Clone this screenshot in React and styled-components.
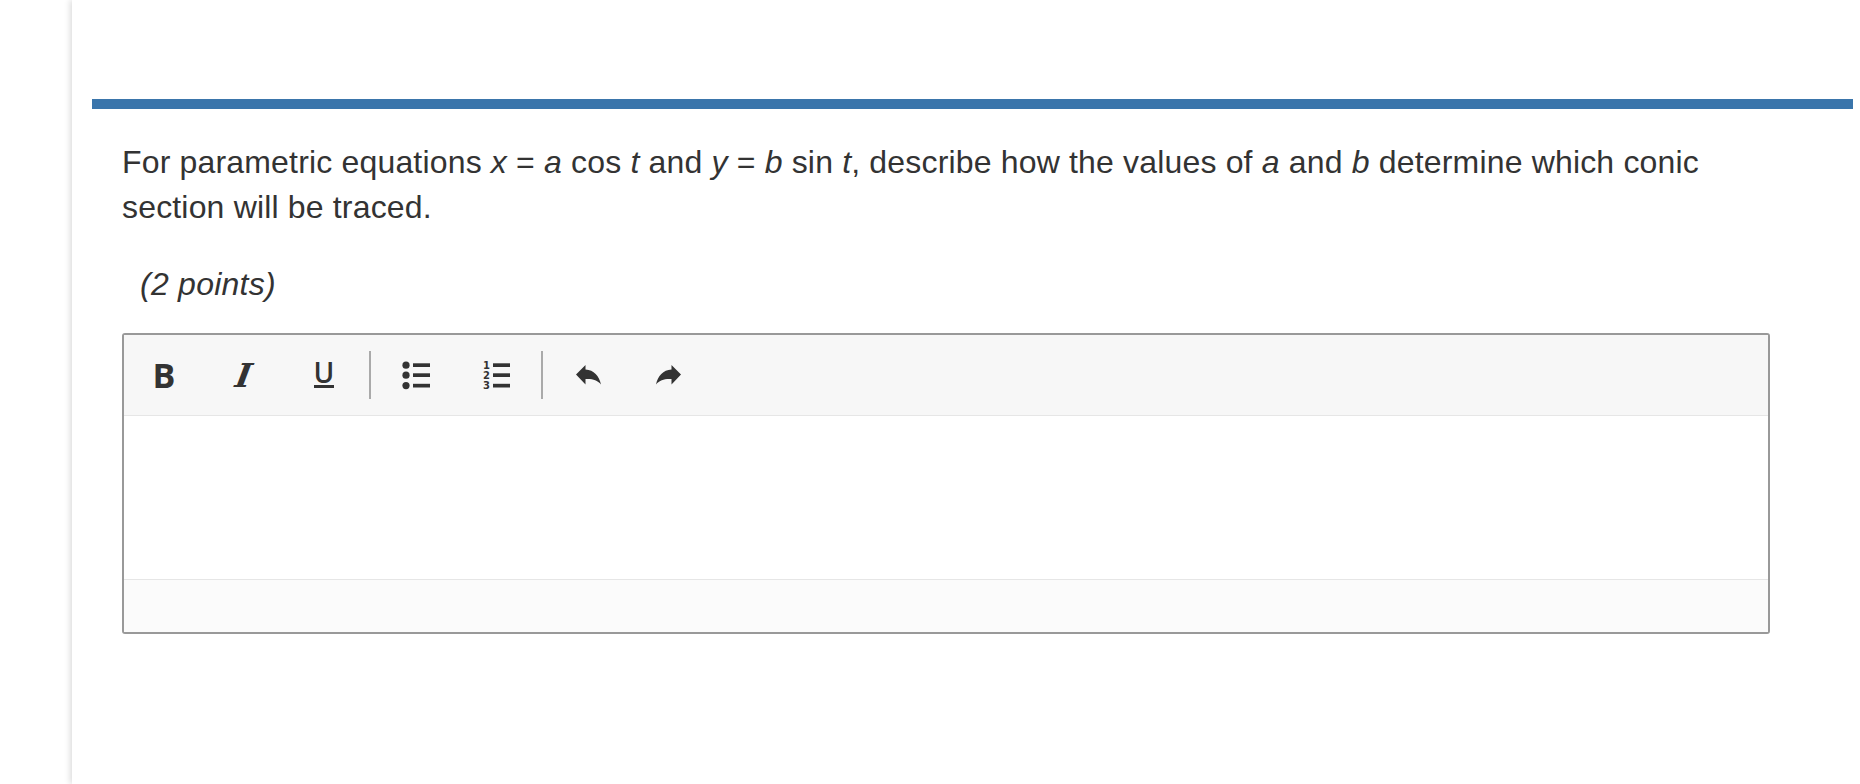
import React from "react";
import styled, { createGlobalStyle } from "styled-components";

const GlobalStyle = createGlobalStyle`
  html, body {
    margin: 0;
    padding: 0;
    height: 100%;
    background: #fff;
    overflow: hidden;
  }
  body {
    font-family: "Liberation Sans", Arial, sans-serif;
    color: #333;
  }
`;

const Page = styled.div`
  height: 784px;
  padding-left: 72px;
  box-sizing: border-box;
`;

const Main = styled.main`
  height: 100%;
  padding: 99px 7px 0 20px;
  box-sizing: border-box;
  background: #fff;
  box-shadow: -2px 0 6px rgba(0, 0, 0, 0.14);
`;

const TopBar = styled.div`
  height: 10px;
  background: #3a75ab;
`;

const Question = styled.section`
  padding: 31px 83px 0 30px;
`;

const Prompt = styled.p`
  margin: 0;
  font-size: 32px;
  line-height: 45px;
  letter-spacing: 0.17px;
  em { font-style: italic; }
`;

const Points = styled.div`
  margin: 32px 0 0 18px;
  font-size: 32px;
  line-height: 45px;
  letter-spacing: 0.25px;
  font-style: italic;
`;

const Editor = styled.div`
  margin-top: 26px;
  border: 2px solid #999;
  border-radius: 3px;
  display: flex;
  flex-direction: column;
`;

const Toolbar = styled.div`
  height: 80px;
  background: #f7f7f7;
  border-bottom: 1px solid #e6e6e6;
  display: flex;
  align-items: center;
`;

const ToolButton = styled.button`
  width: 80px;
  height: 48px;
  padding: 0;
  border: 0;
  background: none;
  color: #333;
  display: flex;
  align-items: center;
  justify-content: center;
  flex: none;
`;

const BoldGlyph = styled.span`
  font: 700 34px/1 "Open Sans", sans-serif;
`;

const ItalicGlyph = styled.span`
  display: inline-block;
  font: italic 700 33px/1 "DejaVu Serif", serif;
  transform: skewX(-10deg);
`;

const UnderlineGlyph = styled.span`
  font: 600 28px/21px "Open Sans", sans-serif;
  padding-bottom: 2px;
  border-bottom: 3px solid #333;
`;

const Divider = styled.div`
  width: 2px;
  height: 48px;
  margin: 0 5px;
  flex: none;
  background: #aaa;
`;

const Body = styled.div`
  height: 163px;
  background: #fff;
  border-bottom: 1px solid #e6e6e6;
`;

const Footer = styled.div`
  height: 52px;
  background: #fbfbfb;
`;

const ListSvg = styled.svg`
  overflow: visible;
`;

const ArrowSvg = styled.svg`
  margin-left: 1px;
  transform: ${(p) => (p.$flip ? "scaleX(-1)" : "none")};
`;

const BulletIcon = () => (
  <ListSvg width="28" height="28" viewBox="0 0 28 28" fill="#333">
    <circle cx="4" cy="4.2" r="3.6" />
    <circle cx="4" cy="14.2" r="3.6" />
    <circle cx="4" cy="24.6" r="3.6" />
    <rect x="11" y="2.3" width="17" height="3.7" />
    <rect x="11" y="12.3" width="17" height="3.7" />
    <rect x="11" y="22.8" width="17" height="3.7" />
  </ListSvg>
);

const NumberIcon = () => (
  <ListSvg width="28" height="28" viewBox="0 0 28 28" fill="#333">
    <text x="1" y="7.5" fontSize="10" fontWeight="700" fontFamily="DejaVu Sans">1</text>
    <text x="1" y="17.5" fontSize="10" fontWeight="700" fontFamily="DejaVu Sans">2</text>
    <text x="1" y="28" fontSize="10" fontWeight="700" fontFamily="DejaVu Sans">3</text>
    <rect x="11" y="2.3" width="17" height="3.7" />
    <rect x="11" y="12.3" width="17" height="3.7" />
    <rect x="11" y="22.8" width="17" height="3.7" />
  </ListSvg>
);

const ReplyIcon = ({ flip }) => (
  <ArrowSvg $flip={flip} width="25" height="20" viewBox="0 0 25 20" fill="#333">
    <path d="M0 9.5 L9.5 0 L9.5 4.6 C18 5 23 11 25 19.5 C21 14.5 16 13.6 9.5 14 L9.5 19.5 Z" />
  </ArrowSvg>
);

export default function App() {
  return (
    <>
      <GlobalStyle />
      <Page>
        <Main>
          <TopBar />
          <Question>
            <Prompt>
              For parametric equations <em>x</em> = <em>a</em> cos <em>t</em> and <em>y</em> = <em>b</em> sin <em>t</em>, describe how the values of <em>a</em> and <em>b</em> determine which conic section will be traced.
            </Prompt>
            <Points>(2 points)</Points>
            <Editor>
              <Toolbar>
                <ToolButton><BoldGlyph>B</BoldGlyph></ToolButton>
                <ToolButton><ItalicGlyph>I</ItalicGlyph></ToolButton>
                <ToolButton><UnderlineGlyph>U</UnderlineGlyph></ToolButton>
                <Divider />
                <ToolButton><BulletIcon /></ToolButton>
                <ToolButton><NumberIcon /></ToolButton>
                <Divider />
                <ToolButton><ReplyIcon /></ToolButton>
                <ToolButton><ReplyIcon flip /></ToolButton>
              </Toolbar>
              <Body />
              <Footer />
            </Editor>
          </Question>
        </Main>
      </Page>
    </>
  );
}
